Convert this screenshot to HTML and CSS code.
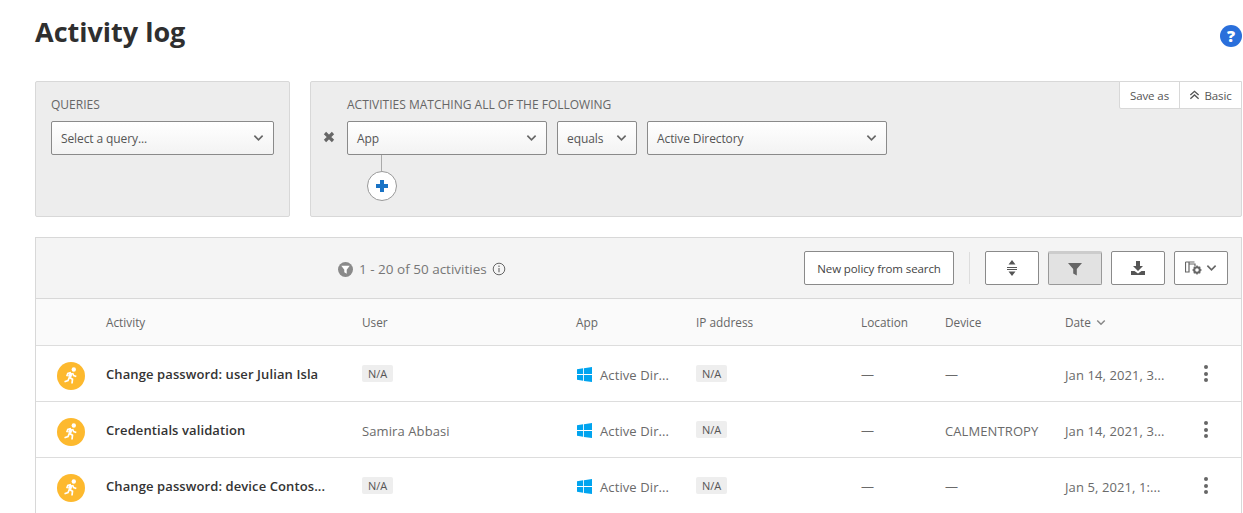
FILE: index.html
```html
<!DOCTYPE html>
<html lang="en">
<head>
  <meta charset="UTF-8" />
  <title>Activity log</title>
  <link rel="stylesheet" href="styles.css">
</head>
<body>
  <svg class="sprites" width="0" height="0">
    <symbol id="chev" viewBox="0 0 12 8"><path d="M1.500 1.500 6 6l4.500-4.500" fill="none" stroke="currentColor" stroke-width="1.800"/></symbol>
    <symbol id="runner" viewBox="0 0 20 20"><circle cx="12.800" cy="3.500" r="2.200" fill="#fff"/><path d="M10.200 6.800 8.500 11" fill="none" stroke="#fff" stroke-width="3.400"/><path d="M10 6.500 6.800 7.500 5.800 10.300M11.500 7 12.700 9.500 15.300 10.500M8.500 11.500 11.500 13.300 11 17.500M8.500 11 7 14.500 3.500 15.700" fill="none" stroke="#fff" stroke-width="1.700"/></symbol>
    <symbol id="win" viewBox="0 0 16 16"><path d="M0 2.300 6.500 1.300v6.200H0zM7.400 1.200 16 0v7.500H7.400zM0 8.500h6.500v6.200L0 13.700zM7.400 8.500H16V16l-8.600-1.200z" fill="#00a4ef"/></symbol>
  </svg>

  <header class="page-head">
    <h1>Activity log</h1>
    <span class="help">?</span>
  </header>

  <section class="filters">
    <div class="panel queries">
      <div class="panel-label">QUERIES</div>
      <div class="select select-query">Select a query...<svg class="chev"><use href="#chev"/></svg></div>
    </div>
    <div class="panel builder">
      <div class="builder-tabs">
        <span class="tab tab-save">Save as</span>
        <span class="tab tab-basic"><svg class="tab-icon" viewBox="0 0 12 10"><path d="M1.500 5 6 1l4.500 4M1.500 9 6 5l4.500 4" fill="none" stroke="#555" stroke-width="1.500"/></svg>Basic</span>
      </div>
      <div class="panel-label">ACTIVITIES MATCHING ALL OF THE FOLLOWING</div>
      <div class="builder-row">
        <svg class="remove" viewBox="0 0 12 12"><path d="M2 2l8 8M10 2l-8 8" stroke="#666" stroke-width="3.200"/></svg>
        <div class="select select-app">App<svg class="chev"><use href="#chev"/></svg></div>
        <div class="select select-op">equals<svg class="chev"><use href="#chev"/></svg></div>
        <div class="select select-val">Active Directory<svg class="chev"><use href="#chev"/></svg></div>
      </div>
      <div class="add-line"></div>
      <div class="add-btn"><svg viewBox="0 0 12 12" width="12" height="12"><path d="M6 0v12M0 6h12" stroke="#1a73c5" stroke-width="4"/></svg></div>
    </div>
  </section>

  <section class="results">
    <div class="toolbar">
      <div class="count">
        <svg class="count-icon" viewBox="0 0 16 16"><circle cx="8" cy="8" r="8" fill="#8a8a8a"/><path d="M3.500 4h9L9.300 8.200V12.500L6.700 11V8.200z" fill="#fff"/></svg>
        <span>1 - 20 of 50 activities</span>
        <svg class="info-icon" viewBox="0 0 14 14"><circle cx="7" cy="7" r="5.800" fill="none" stroke="#666"/><path d="M7 6v4.200M7 3.600v1.300" stroke="#666" stroke-width="1.100"/></svg>
      </div>
      <div class="actions">
        <button class="btn btn-text">New policy from search</button>
        <span class="divider"></span>
        <button class="btn btn-icon"><svg width="12" height="18" viewBox="0 0 12 18"><path d="M6 1 9.500 5.500h-7zM6 17l-3.500-4.500h7z" fill="#555"/><path d="M1 8.500h10M1 10.500h10" stroke="#555" stroke-width="1"/></svg></button>
        <button class="btn btn-icon btn-active"><svg width="14" height="14" viewBox="0 0 14 14"><path d="M0 1h14L8.800 7v6.500L5.200 11.500V7z" fill="#666"/></svg></button>
        <button class="btn btn-icon"><svg width="14" height="14" viewBox="0 0 14 14"><path d="M5 0h4v5h3L7 10 2 5h3zM0 10h3.500L7 12.500 10.500 10H14v4H0z" fill="#555"/></svg></button>
        <button class="btn btn-icon btn-cols">
          <svg width="17" height="14" viewBox="0 0 17 14"><path d="M.5 1h9M.500 1v10h3.500V1M4 3h6v2" fill="none" stroke="#666" stroke-width="1.200"/><circle cx="12" cy="9" r="2.800" fill="none" stroke="#666" stroke-width="2"/><path d="M12 4.500v1.500M12 12v1.500M7.500 9H9M15 9h1.500M8.800 5.800l1 1M14.200 11.200l1 1M15.200 5.800l-1 1M9.800 11.200l-1 1" stroke="#666" stroke-width="1.400"/></svg>
          <svg class="chev"><use href="#chev"/></svg>
        </button>
      </div>
    </div>

    <div class="row row-head">
      <span></span>
      <span>Activity</span>
      <span>User</span>
      <span>App</span>
      <span>IP address</span>
      <span>Location</span>
      <span>Device</span>
      <span class="sort">Date<svg class="sort-chev"><use href="#chev"/></svg></span>
      <span></span>
    </div>

    <div class="row">
      <span class="run"><svg width="20" height="20"><use href="#runner"/></svg></span>
      <span class="name">Change password: user Julian Isla</span>
      <span class="tag-cell"><span class="tag">N/A</span></span>
      <span class="app"><svg width="15" height="15"><use href="#win"/></svg><span class="txt">Active Dir...</span></span>
      <span class="tag-cell"><span class="tag">N/A</span></span>
      <span>—</span>
      <span>—</span>
      <span class="txt">Jan 14, 2021, 3...</span>
      <span class="dots"><i></i><i></i><i></i></span>
    </div>
    <div class="row">
      <span class="run"><svg width="20" height="20"><use href="#runner"/></svg></span>
      <span class="name">Credentials validation</span>
      <span class="txt">Samira Abbasi</span>
      <span class="app"><svg width="15" height="15"><use href="#win"/></svg><span class="txt">Active Dir...</span></span>
      <span class="tag-cell"><span class="tag">N/A</span></span>
      <span>—</span>
      <span class="txt">CALMENTROPY</span>
      <span class="txt">Jan 14, 2021, 3...</span>
      <span class="dots"><i></i><i></i><i></i></span>
    </div>
    <div class="row">
      <span class="run"><svg width="20" height="20"><use href="#runner"/></svg></span>
      <span class="name">Change password: device Contos...</span>
      <span class="tag-cell"><span class="tag">N/A</span></span>
      <span class="app"><svg width="15" height="15"><use href="#win"/></svg><span class="txt">Active Dir...</span></span>
      <span class="tag-cell"><span class="tag">N/A</span></span>
      <span>—</span>
      <span>—</span>
      <span class="txt">Jan 5, 2021, 1:...</span>
      <span class="dots"><i></i><i></i><i></i></span>
    </div>
  </section>
</body>
</html>
```

FILE: styles.css
```css
html, body {
  height: 513px;
  overflow: hidden;
}
body {
  margin: 0;
  padding: 0 1px 0 35px;
  background: #fff;
  font-family: "Open Sans", "Noto Sans", sans-serif;
  font-size: 12px;
  color: #666;
}
.sprites {
  position: absolute;
}
.page-head {
  display: flex;
  justify-content: space-between;
  align-items: flex-start;
  height: 81px;
}
.page-head h1 {
  margin: 13px 0 0;
  font-size: 27px;
  line-height: 38px;
  font-weight: 700;
  color: #2f2f2f;
}
.help {
  width: 22px;
  height: 22px;
  margin-top: 25px;
  border-radius: 50%;
  background: #2a6fdb;
  color: #fff;
  font-size: 16px;
  font-weight: 800;
  line-height: 22px;
  text-align: center;
}
.filters {
  display: flex;
  gap: 20px;
  height: 136px;
}
.panel {
  position: relative;
  box-sizing: border-box;
  background: #ededed;
  border: 1px solid #d8d8d8;
  border-radius: 2px;
}
.queries {
  width: 255px;
  padding: 15px;
}
.builder {
  flex: 1;
  padding: 15px 36px;
}
.panel-label {
  font-size: 12px;
  line-height: 16px;
  color: #666;
}
.select {
  box-sizing: border-box;
  display: flex;
  justify-content: space-between;
  align-items: center;
  height: 34px;
  margin-top: 8px;
  padding: 0 9px;
  background: linear-gradient(#fff, #f3f3f3);
  border: 1px solid #8a8a8a;
  border-radius: 2px;
  color: #555;
  letter-spacing: -0.100px;
}
.chev {
  width: 11px;
  height: 8px;
  color: #666;
}
.select-query { width: 223px; }
.select-app { width: 200px; }
.select-op { width: 80px; }
.select-val { width: 240px; }
.builder-row {
  position: relative;
  display: flex;
  gap: 10px;
}
.remove {
  position: absolute;
  left: -24px;
  top: 18px;
  width: 12px;
  height: 12px;
}
.builder-tabs {
  position: absolute;
  top: -1px;
  right: -1px;
  display: flex;
  background: #fff;
  border: 1px solid #d8d8d8;
  border-radius: 0 0 0 2px;
}
.tab {
  box-sizing: border-box;
  display: flex;
  align-items: center;
  justify-content: center;
  gap: 4px;
  height: 26px;
  font-size: 11.500px;
  letter-spacing: -0.100px;
  color: #555;
}
.tab-save { width: 59px; }
.tab-basic { width: 62px; }
.tab + .tab {
  border-left: 1px solid #d8d8d8;
}
.tab-icon {
  width: 11px;
  height: 10px;
}
.add-line {
  width: 1px;
  height: 16px;
  margin-left: 34px;
  background: #aaa;
}
.add-btn {
  box-sizing: border-box;
  display: flex;
  align-items: center;
  justify-content: center;
  width: 30px;
  height: 30px;
  margin-left: 20px;
  background: #fff;
  border: 1px solid #999;
  border-radius: 50%;
}
.results {
  margin-top: 20px;
  border: 1px solid #d8d8d8;
  border-bottom: 0;
}
.toolbar {
  position: relative;
  display: flex;
  justify-content: flex-end;
  align-items: center;
  height: 60px;
  padding: 0 13px 0 0;
  background: #f4f4f4;
  border-bottom: 1px solid #d8d8d8;
}
.count {
  position: absolute;
  left: 302px;
  top: 22px;
  display: flex;
  align-items: center;
  gap: 6px;
  font-size: 13.500px;
  line-height: 18px;
  color: #777;
}
.count-icon {
  width: 15px;
  height: 15px;
}
.info-icon {
  width: 14px;
  height: 14px;
  margin-left: -1px;
}
.actions {
  display: flex;
  align-items: center;
}
.btn {
  box-sizing: border-box;
  display: flex;
  align-items: center;
  justify-content: center;
  height: 34px;
  padding: 0;
  background: #fff;
  border: 1px solid #8a8a8a;
  border-radius: 2px;
  font-family: inherit;
  color: #444;
}
.btn-text {
  width: 150px;
  font-size: 11.500px;
  letter-spacing: -0.100px;
}
.divider {
  width: 1px;
  height: 32px;
  margin: 0 15px;
  background: #ddd;
}
.btn-icon {
  width: 54px;
  margin-right: 9px;
}
.btn-icon:last-child {
  margin-right: 0;
}
.btn-active {
  background: #e2e2e2;
  border-top: 3px solid #ccc;
  border-color: #ccc #999 #999;
}
.btn-cols {
  gap: 4px;
}
.row {
  display: grid;
  grid-template-columns: 70px 256px 214px 120px 165px 84px 120px 130px 1fr;
  align-items: center;
  box-sizing: border-box;
  height: 56px;
  background: #fff;
  border-bottom: 1px solid #ddd;
  font-size: 13px;
  letter-spacing: 0.100px;
  color: #6a6a6a;
  white-space: nowrap;
}
.row-head {
  height: 47px;
  background: #fafafa;
  font-size: 11.800px;
  letter-spacing: 0;
  color: #666;
}
.txt {
  padding-top: 3px;
}
.sort {
  display: flex;
  align-items: center;
  gap: 5px;
}
.sort-chev {
  width: 10px;
  height: 7px;
  color: #888;
}
.run {
  display: flex;
  align-items: center;
  justify-content: center;
  width: 28px;
  height: 28px;
  margin: 5px 0 0 21px;
  border-radius: 50%;
  background: #fdb92e;
}
.name {
  padding-bottom: 1px;
  padding-top: 2px;
  font-weight: 600;
  color: #333;
}
.tag-cell {
  margin-top: -2px;
}
.tag {
  display: inline-block;
  padding: 0 6px;
  background: #eee;
  border-radius: 2px;
  font-size: 11px;
  letter-spacing: 0;
  line-height: 17px;
  color: #555;
}
.app {
  display: flex;
  align-items: center;
  gap: 8px;
}
.app svg {
  margin: 1px 0 0 1px;
}
.dots {
  display: flex;
  flex-direction: column;
  align-items: center;
  gap: 2.500px;
  width: 22px;
}
.dots i {
  width: 4px;
  height: 4px;
  border-radius: 50%;
  background: #666;
}
```
